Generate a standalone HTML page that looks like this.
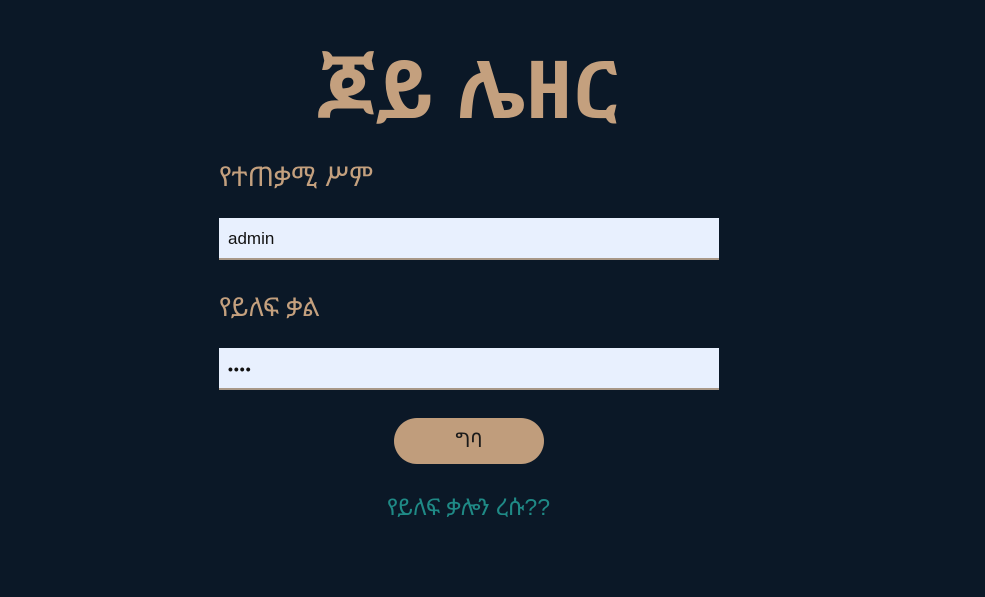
<!DOCTYPE html>
<html><head><meta charset="utf-8"><style>
html,body{margin:0;padding:0;width:985px;height:597px;background:#0b1827;overflow:hidden;font-family:"Liberation Sans","Noto Sans Ethiopic","Abyssinica SIL",sans-serif}
h1{position:absolute;left:0;width:935px;top:46px;margin:0;text-align:center;color:#c4a07e;font-size:80px;font-weight:bold;line-height:90px}
.lbl{position:absolute;left:219px;color:#c4a07e;font-size:27px;line-height:32px}
.inp{position:absolute;left:219px;width:500px;height:42px;background:#e8f0fe;border-bottom:2px solid #a89888;box-sizing:border-box;font-size:17px;color:#111;padding-left:9px;line-height:42px}
.btn{position:absolute;left:394px;top:418px;width:150px;height:46px;border-radius:23px;background:#c09d7c;color:#1a1a1a;text-align:center;line-height:46px;font-size:20px}
.lnk{position:absolute;left:0;width:937px;top:492px;text-align:center;color:#1f8a86;font-size:23px;line-height:30px}
</style></head><body>
<h1>ጆይ ሌዘር</h1>
<div class="lbl" style="top:161px">የተጠቃሚ ሥም</div>
<div class="inp" style="top:218px">admin</div>
<div class="lbl" style="top:291px;font-size:26px">የይለፍ ቃል</div>
<div class="inp" style="top:348px;font-size:14px;letter-spacing:1px;font-weight:bold">••••</div>
<div class="btn">ግባ</div>
<div class="lnk">የይለፍ ቃሎን ረሱ??</div>
</body></html>
